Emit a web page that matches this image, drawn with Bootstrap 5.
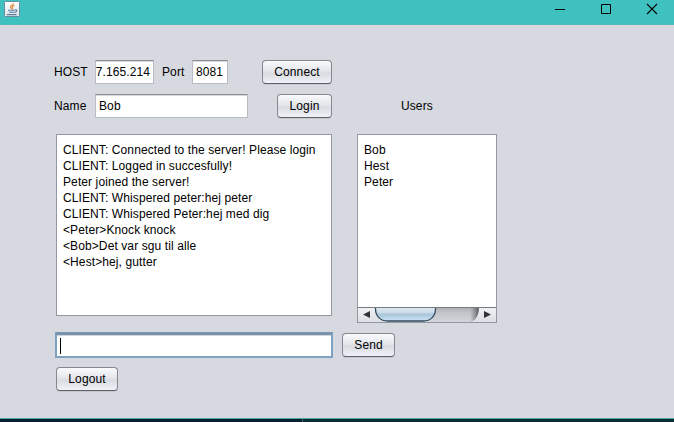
<!DOCTYPE html>
<html lang="en">
<head>
<meta charset="utf-8">
<meta name="viewport" content="width=device-width, initial-scale=1">
<title>Chat client</title>
<link href="https://cdn.jsdelivr.net/npm/bootstrap@5.3.0/dist/css/bootstrap.min.css" rel="stylesheet">
<style>
body{width:674px;height:422px;background:#d6d9e0;color:#000;font:12px/16px "Liberation Sans",Arial,sans-serif;letter-spacing:.1px}
.titlebar{height:25px;background:#3fc1bf;border-bottom:1px solid #53b9ba}
.java-icon{margin-left:4px;margin-top:1px}
.win-controls{margin-right:16px;gap:35px}
.client-area{height:393px;padding:35px 0 0 54px}
.form-line{height:24px;margin-bottom:10px}
.field{height:24px;padding:0 3px;border:1px solid #b9bcc2;border-top-color:#8d8f94;border-radius:0;background:#fff;box-shadow:inset 0 1px 0 #d6d7da;line-height:23px;overflow:hidden;white-space:nowrap}
.swing-btn{height:24px;padding:0;line-height:22px;font-size:12px;letter-spacing:.1px;color:#000;border:1px solid #85888f;border-bottom-color:#5c6068;border-radius:4px;background:linear-gradient(#fafafc,#e4e6eb 45%,#d9dbe2 55%,#f0f2f8);box-shadow:0 1px 0 #c5c8cf}
.lbl-name{width:41px}
.lbl-port{width:38px;margin-left:0;padding-left:8px}
.w-host{width:59px}.w-port{width:36px}.w-name{width:153px}
.b-connect{width:70px;margin-left:34px}.b-login{width:55px;margin-left:29px}
.lbl-users{margin-left:69px}
.panels{margin:16px 0 0 2px;gap:25px}
.chat-log,.user-list{border:1px solid #9297a1;background:#fff}
.chat-log{width:276px;height:182px;padding:7px 6px}
.user-list{width:140px;height:189px}
.user-names{padding:7px 6px}
.hscroll{height:15px}
.message-line{margin:9px 0 0 1px;height:26px;gap:9px}
.message-input{width:278px;height:26px;border:2px solid #7fa2c2;border-top:3px solid #7893b0;outline:0;background:#fff;box-shadow:inset 0 1px 0 #d4d6da;padding:3px 3px}
.caret{width:1px;height:16px;background:#000}
.b-send{width:53px}.b-logout{width:62px;margin:9px 0 0 2px}
.desktop-edge{height:4px;border-top:1px solid #4fa6a8;background:#06222e}
.edge-left{width:303px;border-right:1px solid #456166}
.edge-right{background:#082c2f}
</style>
</head>
<body class="overflow-hidden">
<header class="titlebar d-flex justify-content-between align-items-start">
<svg class="java-icon" width="16" height="16" viewBox="0 0 16 16">
<defs><linearGradient id="tile" x2="0" y2="1"><stop stop-color="#fff"/><stop offset="1" stop-color="#dce5ea"/></linearGradient></defs>
<rect x=".5" y=".5" width="15" height="15" rx="1" fill="url(#tile)" stroke="#688d9d"/>
<path d="M9.5 2.2C10 4 6 4.5 6.4 6.1c.2.8 1.2 1 1 2M10.5 4.5C8 5.2 7.8 6 8.6 6.8c.4.5 0 1-.5 1.4" fill="none" stroke="#e38a36" stroke-width="1.1"/>
<path d="M4 9.2h7M5 11.2h5.5M3 13.6h9.5M11 8.8c2.8-.5 2.4 2-.2 2.6" fill="none" stroke="#577c9e" stroke-width="1.1"/>
</svg>
<div class="win-controls d-flex">
<svg width="12" height="18" viewBox="0 0 12 18"><path d="M1 9.5h10" stroke="#000"/></svg>
<svg width="10" height="18" viewBox="0 0 10 18"><path d="M.5 4.5h9v9h-9z" fill="none" stroke="#000"/></svg>
<svg width="12" height="18" viewBox="0 0 12 18"><path d="M1 4l10 10M11 4L1 14" stroke="#000" stroke-width="1.1"/></svg>
</div>
</header>
<main class="client-area">
<div class="form-line d-flex align-items-center">
<label class="lbl-name">HOST</label><div class="field w-host d-flex justify-content-end">192.167.165.214</div>
<label class="lbl-port">Port</label><div class="field w-port">8081</div>
<button class="btn swing-btn b-connect">Connect</button>
</div>
<div class="form-line d-flex align-items-center">
<label class="lbl-name">Name</label><div class="field w-name">Bob</div>
<button class="btn swing-btn b-login">Login</button>
<label class="lbl-users">Users</label>
</div>
<div class="panels d-flex align-items-start">
<div class="chat-log text-nowrap">
<div>CLIENT: Connected to the server! Please login</div>
<div>CLIENT: Logged in succesfully!</div>
<div>Peter joined the server!</div>
<div>CLIENT: Whispered peter:hej peter</div>
<div>CLIENT: Whispered Peter:hej med dig</div>
<div>&lt;Peter&gt;Knock knock</div>
<div>&lt;Bob&gt;Det var sgu til alle</div>
<div>&lt;Hest&gt;hej, gutter</div>
</div>
<div class="user-list d-flex flex-column justify-content-between">
<div class="user-names"><div>Bob</div><div>Hest</div><div>Peter</div></div>
<svg class="hscroll d-block" width="138" height="15" viewBox="0 0 138 15">
<defs>
<linearGradient id="track" x2="0" y2="1"><stop stop-color="#a9abb1"/><stop offset=".35" stop-color="#c2c4c9"/><stop offset="1" stop-color="#d3d5da"/></linearGradient>
<linearGradient id="endcap" x2="0" y2="1"><stop stop-color="#f2f3f5"/><stop offset="1" stop-color="#dcdee2"/></linearGradient>
<linearGradient id="thumb" x2="0" y2="1"><stop stop-color="#e1ebf3"/><stop offset=".42" stop-color="#c9dae7"/><stop offset=".5" stop-color="#a9c4d8"/><stop offset="1" stop-color="#c9e4f5"/></linearGradient>
<linearGradient id="shade"><stop stop-color="#777a80" stop-opacity="0"/><stop offset="1" stop-color="#54575d"/></linearGradient>
</defs>
<path d="M0 0h138v15H0z" fill="url(#track)"/>
<path d="M112 0h9v15h-9z" fill="url(#shade)"/>
<path d="M0 0h17c0 8 4 13 12 15H0zM121 0h17v15h-25c5-2 8-7 8-15z" fill="url(#endcap)"/>
<path d="M17.5 0v2c0 7 5 12 12 12h36c7 0 12-5 12-12V0z" fill="url(#thumb)" stroke="#344c60" stroke-width="1.3"/>
<path d="M0 .5h138" stroke="#777b82"/>
<path d="M12 4v7L5 7.500zM126 4v7l7-3.500z" fill="#333"/>
</svg>
</div>
</div>
<div class="message-line d-flex align-items-center">
<div class="message-input"><div class="caret"></div></div>
<button class="btn swing-btn b-send">Send</button>
</div>
<button class="btn swing-btn b-logout d-block">Logout</button>
</main>
<footer class="desktop-edge d-flex"><div class="edge-left"></div><div class="edge-right flex-grow-1"></div></footer>
<script src="https://cdn.jsdelivr.net/npm/bootstrap@5.3.0/dist/js/bootstrap.bundle.min.js"></script>
</body>
</html>
